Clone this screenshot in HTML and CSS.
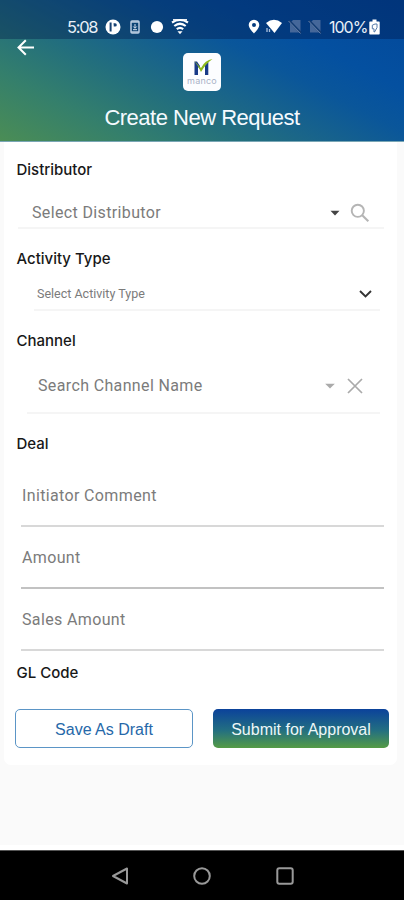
FILE: index.html
```html
<!DOCTYPE html>
<html lang="en">
<head>
<meta charset="utf-8">
<title>Create New Request</title>
<link rel="stylesheet" href="styles.css">
</head>
<body>
<div class="screen">
  <header class="header">
    <div class="status">
      <div class="status-left">
        <span class="clock">5:08</span>
        <svg class="ic-p" width="16" height="16" viewBox="0 0 16 16"><circle cx="8" cy="8" r="7.500" fill="#fff"/><path d="M5.600 3.500v9" stroke="#174273" stroke-width="2"/><path d="M8.500 4.200h1.600a1.700 1.700 0 0 1 0 3.400H8.800z" fill="#174273"/></svg>
        <svg class="ic-doc" width="10" height="14" viewBox="0 0 10 14"><rect x="1" y="1" width="8" height="12" rx="1" fill="none" stroke="#b9cbe1" stroke-width="1.500"/><path d="M1 2h8M1 12h8" stroke="#b9cbe1" stroke-width="1.600"/><path d="M5 4v4M3.300 6.500L5 8.300l1.700-1.800M3 9.700h4" fill="none" stroke="#d4e0f0"/></svg>
        <svg class="ic-dot" width="14" height="14" viewBox="0 0 14 14"><circle cx="7" cy="7" r="6.100" fill="#fff"/></svg>
        <svg class="ic-wifi" width="18" height="17" viewBox="0 0 18 17"><path d="M1 4.500q8-5 16 0M3.300 8q5.700-4.500 11.400 0M5.800 11.200q3.200-2.500 6.400 0" fill="none" stroke="#fff" stroke-width="2.200"/><path d="M2 1.900h14" stroke="#fff" stroke-width="1.600"/><path d="M6.500 13.200h5L9 16.200z" fill="#fff"/></svg>
      </div>
      <div class="status-right">
        <svg width="12" height="15" viewBox="0 0 12 15"><path fill="#fff" fill-rule="evenodd" d="M6 .8a5.300 5.300 0 0 0-5.300 5.300C.7 9.500 6 14.500 6 14.500s5.300-5 5.300-8.400A5.300 5.300 0 0 0 6 .8zM6 4a2 2 0 1 1 0 4 2 2 0 0 1 0-4z"/></svg>
        <svg class="ic-net" width="16" height="15" viewBox="0 0 16 15"><path d="M0 4q8-6.500 16 0L8.500 14z" fill="#fff"/><path d="M1 9v4M3.500 10v3" stroke="#a9bfdc" stroke-width="1.300"/></svg>
        <svg class="ic-sim" width="14" height="15" viewBox="0 0 14 15"><path d="M5 1h7.500v12.500H2V4z" fill="#45679a"/><path d="M1 1.500L13 14" stroke="#123b73" stroke-width="2.300"/><path d="M.5 2L12.500 14.500" stroke="#6581aa"/></svg>
        <svg class="ic-sim" width="14" height="15" viewBox="0 0 14 15"><path d="M5 1h7.500v12.500H2V4z" fill="#45679a"/><path d="M1 1.500L13 14" stroke="#123b73" stroke-width="2.300"/><path d="M.5 2L12.500 14.500" stroke="#6581aa"/></svg>
        <span class="percent">100%</span>
        <svg class="ic-bat" width="11" height="16" viewBox="0 0 11 16"><path d="M3.500.5h4v2H10q.7 0 .7.800v11.500q0 .8-.7.800H1q-.7 0-.7-.8V3.300q0-.8.700-.8h2.500z" fill="#fff"/><path d="M5 13V9.800H3.300V6.200L6 5h2v3.600L5.500 13z" fill="none" stroke="#557aa8" stroke-width="1"/></svg>
      </div>
    </div>
    <svg class="back" width="18" height="17" viewBox="0 0 18 17"><path d="M17 8.500H2M8.800 1.200L1.500 8.500l7.300 7.300" fill="none" stroke="#fff" stroke-width="2"/></svg>
    <div class="logo">
      <svg width="24" height="18" viewBox="0 0 24 18"><path d="M4.500 3.500h2.500L10 8v3L8 9v8H4.500z" fill="#183a88"/><path d="M15 7l3.300-3.500V17H15z" fill="#183a88"/><path d="M4 2.500L11 10Q15 2 22.500 1 16 5.500 11 14 8.500 8 4 2.500z" fill="#8db91d"/></svg>
      <span class="brand">manco</span>
    </div>
    <h1 class="title"><span>Create New Request</span></h1>
  </header>

  <main class="content">
    <form class="card">
      <div class="label"><span>Distributor</span></div>
      <div class="field distributor">
        <span class="hint">Select Distributor</span>
        <svg class="caret" width="10" height="6" viewBox="0 0 10 6"><path d="M.5.700h9L5 5.500z" fill="#444"/></svg>
        <svg width="20" height="20" viewBox="0 0 20 20"><circle cx="7.800" cy="7.800" r="6.100" fill="none" stroke="#b5b5b5" stroke-width="1.900"/><path d="M12 12l6.300 6.300" stroke="#b5b5b5" stroke-width="2.100"/></svg>
      </div>
      <div class="label lowered"><span>Activity Type</span></div>
      <div class="field activity">
        <span class="hint">Select Activity Type</span>
        <svg width="13" height="8" viewBox="0 0 13 8"><path d="M1 1l5.500 5.500L12 1" fill="none" stroke="#333" stroke-width="1.900"/></svg>
      </div>
      <div class="label"><span>Channel</span></div>
      <div class="field channel">
        <span class="hint">Search Channel Name</span>
        <svg class="caret" width="10" height="6" viewBox="0 0 10 6"><path d="M.2.700h9.600L5 5.500z" fill="#aaa"/></svg>
        <svg width="16" height="16" viewBox="0 0 16 16"><path d="M1 1l14 14M15 1L1 15" stroke="#aaa" stroke-width="1.700"/></svg>
      </div>
      <div class="label"><span>Deal</span></div>
      <div class="inputs">
        <div class="input thick"><span class="hint">Initiator Comment</span></div>
        <div class="input dark"><span class="hint">Amount</span></div>
        <div class="input"><span class="hint">Sales Amount</span></div>
      </div>
      <div class="label gl"><span>GL Code</span></div>
      <div class="actions">
        <button type="button" class="btn draft"><span>Save As Draft</span></button>
        <button type="button" class="btn submit"><span>Submit for Approval</span></button>
      </div>
    </form>
  </main>

  <nav class="navbar">
    <svg width="18" height="20" viewBox="0 0 18 20"><path d="M16 2.500v15L2 10z" fill="none" stroke="#999" stroke-width="2" stroke-linejoin="round"/></svg>
    <svg width="20" height="20" viewBox="0 0 20 20"><circle cx="10" cy="10" r="7.800" fill="none" stroke="#999" stroke-width="2"/></svg>
    <svg width="20" height="20" viewBox="0 0 20 20"><rect x="2.300" y="2.300" width="15.400" height="15.400" rx="2" fill="none" stroke="#999" stroke-width="2"/></svg>
  </nav>
</div>
</body>
</html>
```
FILE: styles.css
```css
* { box-sizing: border-box; }
body { margin: 0; font-family: "Liberation Sans", sans-serif; }
span { white-space: nowrap; }
svg { flex: none; display: block; }
.screen { width: 404px; height: 900px; display: flex; flex-direction: column; overflow: hidden; background: #fafafa; }
.header {
  height: 142px; position: relative; display: flex; flex-direction: column; align-items: center;
  background: linear-gradient(27deg, #4b8d55 0%, #347f6c 20%, #236f7d 36%, #1a6589 46%, #0a569a 62%, #0450a0 74%, #03489a 100%);
  border-bottom: 1px solid #79a6b5;
}
.status { width: 100%; height: 39px; padding: 14px 23px 0 67px; display: flex; justify-content: space-between; background: rgba(0, 20, 70, .36); color: #e9f0f8; }
.status-left, .status-right { display: flex; align-items: center; height: 25px; }
.clock { font: 16.500px Inter, sans-serif; letter-spacing: -1.300px; width: 38px; }
.ic-doc { margin-left: 9px; }
.ic-dot { margin-left: 10px; }
.ic-wifi { margin-left: 7px; }
.ic-net { margin-left: 6px; }
.ic-sim { margin-left: 6px; }
.percent { font: 16px Inter, sans-serif; letter-spacing: -1px; width: 38px; margin-left: 7px; }
.ic-bat { margin-left: 2px; margin-right: 1px; }
.back { position: absolute; left: 17px; top: 39px; }
.logo { width: 38px; height: 38px; margin-top: 14px; background: #fcfdff; border-radius: 5px; display: flex; flex-direction: column; align-items: center; padding-top: 5px; }
.brand { font: 9px/10px Inter, sans-serif; color: #a9b2c7; letter-spacing: .2px; }
.title { margin: 13px 0 0; font-size: 22px; letter-spacing: -.5px; line-height: 27px; font-weight: 400; color: #f5faff; text-align: center; }
.content { flex: 1; padding: 0 7px 0 4px; border-bottom: 5px solid #fff; }
.card { height: 623px; background: #fff; border-radius: 0 0 7px 7px; padding: 18px 8px 0 12px; display: flex; flex-direction: column; }
.label { height: 20px; font: 500 15px/20px Inter, sans-serif; color: #181818; padding-left: .5px; }
.lowered { padding-top: 1px; }
.field { display: flex; align-items: center; border-bottom: 2px solid #f5f5f5; }
.hint { font-family: Roboto, sans-serif; font-size: 16px; letter-spacing: .36px; color: #7b7b7b; }
.field .hint { flex: 1; }
.distributor { margin: 18px 5px 19px 2px; height: 31px; padding: 0 14px 0 14px; }
.distributor .caret { margin-right: 10px; }
.activity { margin: 10px 9px 20px 18px; height: 33px; padding: 0 8px 0 3px; }
.activity .hint { font-size: 12.500px; letter-spacing: 0; }
.channel { margin: 9px 9px 20px 11px; height: 54px; padding: 0 17px 1px 11px; }
.channel .caret { margin-right: 12px; }
.inputs { display: flex; flex-direction: column; margin: 10px 5px 0; }
.input { height: 62px; border-bottom: 2px solid #d8d8d8; padding: 21px 0 0 1px; line-height: 20px; }
.thick { height: 63px; padding-top: 22px; }
.dark { border-bottom-color: #c2c2c2; }
.gl { margin-top: 12px; }
.actions { margin: 26px 0 0 -1px; display: grid; grid-template-columns: 178px 176px; gap: 20px; }
.btn { height: 39px; border-radius: 5px; padding: 2px 0 0; font: 16px "Liberation Sans", sans-serif; }
.draft { background: #fff; border: 1px solid #5b95c6; color: #2668a9; }
.submit { border: 0; color: #edf7f8; background: linear-gradient(#0b429b, #236f81 55%, #559b45); }
.navbar { height: 50px; background: #000; border-top: 1px solid #555; display: flex; justify-content: center; align-items: center; gap: 63px; padding-left: 1px; }
```
